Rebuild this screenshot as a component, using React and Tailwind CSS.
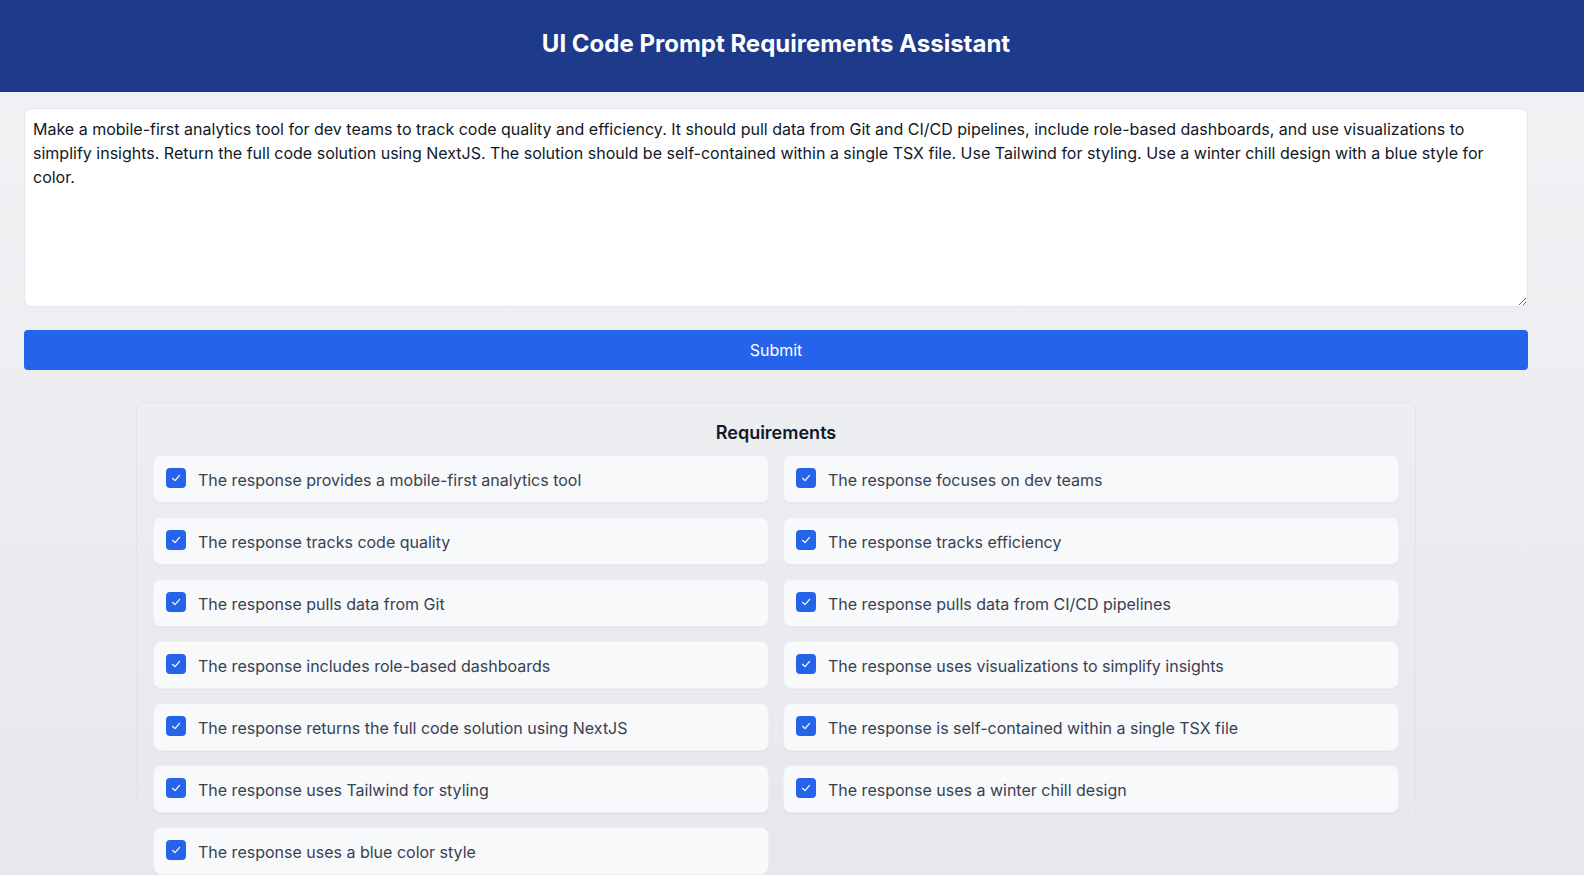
import React from "react";

const left = [
  "The response provides a mobile-first analytics tool",
  "The response tracks code quality",
  "The response pulls data from Git",
  "The response includes role-based dashboards",
  "The response returns the full code solution using NextJS",
  "The response uses Tailwind for styling",
  "The response uses a blue color style",
];
const right = [
  "The response focuses on dev teams",
  "The response tracks efficiency",
  "The response pulls data from CI/CD pipelines",
  "The response uses visualizations to simplify insights",
  "The response is self-contained within a single TSX file",
  "The response uses a winter chill design",
];

const items = [];
for (let i = 0; i < left.length; i++) {
  items.push(left[i]);
  if (right[i]) items.push(right[i]);
}

const prompt =
  "Make a mobile-first analytics tool for dev teams to track code quality and efficiency. It should pull data from Git and CI/CD pipelines, include role-based dashboards, and use visualizations to simplify insights. Return the full code solution using NextJS. The solution should be self-contained within a single TSX file. Use Tailwind for styling. Use a winter chill design with a blue style for color.";

function Check() {
  return (
    <span className="flex h-5 w-5 shrink-0 items-center justify-center rounded-[4px] bg-[#2563eb]">
      <svg width="12" height="12" viewBox="0 0 12 12" fill="none">
        <path d="M2.5 6.3 L5 8.6 L9.6 3.4" stroke="white" strokeWidth="1.2" strokeLinecap="round" strokeLinejoin="round" />
      </svg>
    </span>
  );
}

export default function App() {
  return (
    <div className="min-h-screen bg-gradient-to-b from-[#f2f3f5] to-[#e5e7eb] font-['Inter',sans-serif]">
      <header className="bg-[#1e3a8a] pb-[32px] pl-0 pr-[32px] pt-[28px]">
        <h1 className="text-center text-2xl leading-8 font-bold text-white">UI Code Prompt Requirements Assistant</h1>
      </header>
      <main className="pb-8 pl-6 pr-[56px] pt-4">
        <textarea
          className="block h-[199px] w-full resize-y rounded-lg border border-[#e5e7eb] bg-white p-2 text-base leading-6 text-[#111827] outline-none"
          defaultValue={prompt}
        />
        <button className="mt-[23px] flex h-10 w-full items-center justify-center rounded-[4px] bg-[#2563eb] text-base text-white">
          Submit
        </button>
        <section className="mx-auto mt-8 w-[1280px] rounded-lg border border-[#e2e4e8] p-4">
          <h2 className="mb-2 text-center text-lg leading-7 font-semibold text-[#111827]">Requirements</h2>
          <div className="grid grid-cols-2 gap-[14px]">
            {items.map((t) => (
              <div
                key={t}
                className="flex items-start gap-3 rounded-lg border border-[#eceef1] bg-[#f8f9fb] px-3 pb-[10px] pt-3 shadow-[0_1px_1px_rgba(0,0,0,0.03)]"
              >
                <Check />
                <span className="text-base leading-6 text-[#374151]">{t}</span>
              </div>
            ))}
          </div>
        </section>
      </main>
    </div>
  );
}
